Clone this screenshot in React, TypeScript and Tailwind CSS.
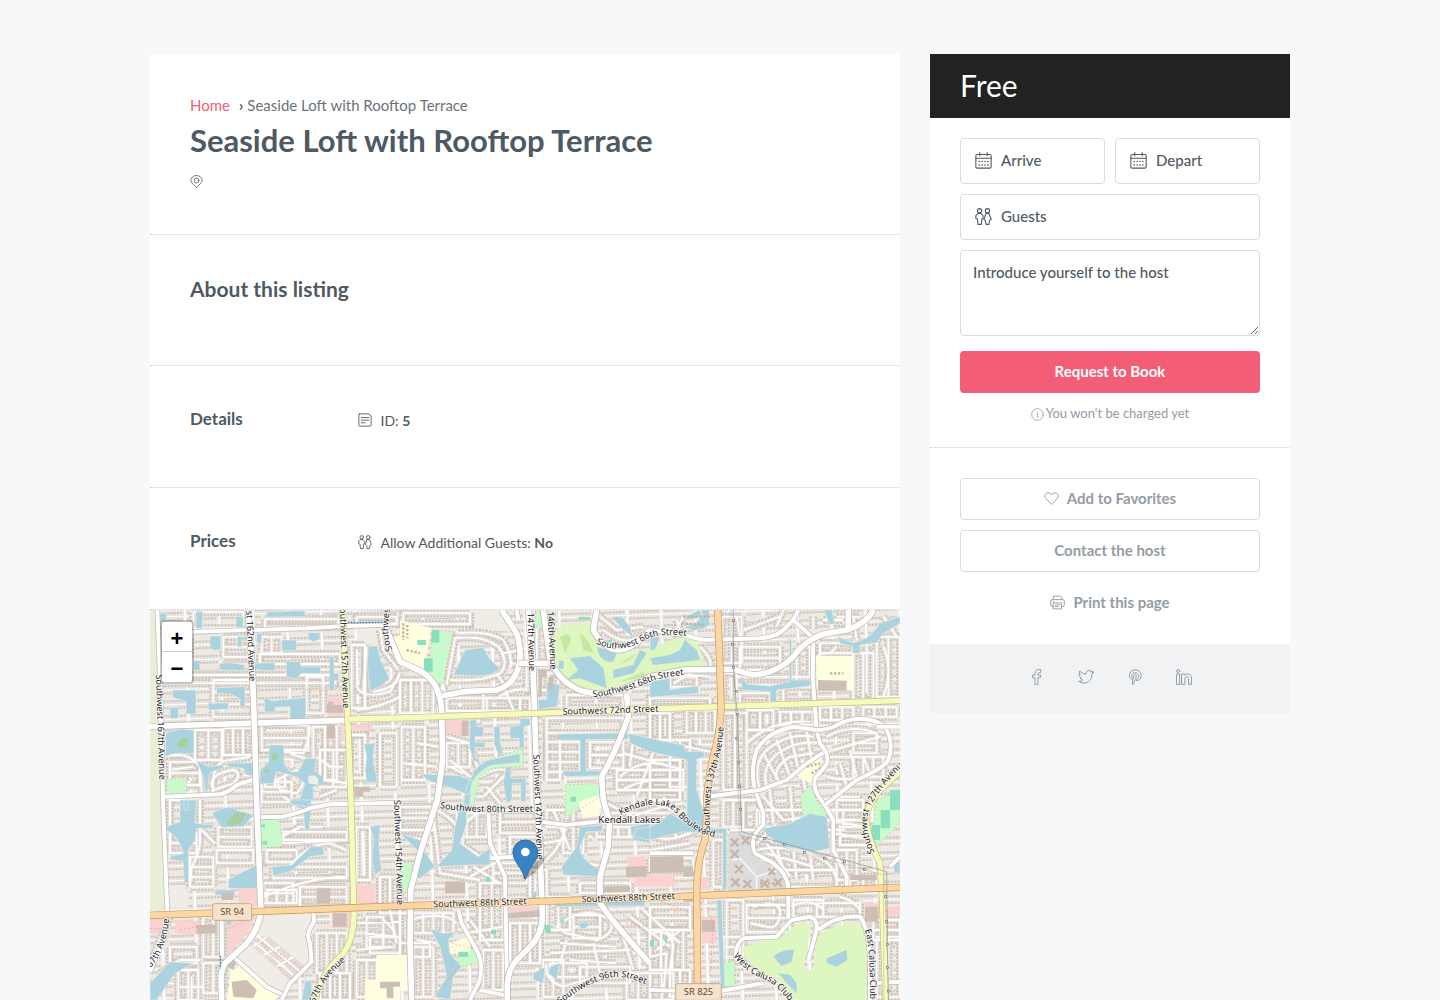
import type { ReactNode } from "react";

type Box = [number, number, number, number];

interface IconProps {
  className?: string;
  children: ReactNode;
}

interface StreetLabel {
  id: string;
  text: string;
  d: string;
}

// Map geometry is stored at three units per CSS pixel.
const MAP_W = 2250;
const MAP_H = 1170;

// Residential blocks: [x, y, width, height]
const ROWS_H: Box[] = [
  [130, 5, 150, 50], [345, 28, 220, 24], [45, 195, 510, 25], [220, 80, 75, 60], [330, 132, 240, 30],
  [190, 210, 120, 110], [335, 345, 140, 75], [60, 455, 90, 70], [335, 515, 90, 60], [620, 20, 120, 22],
  [760, 10, 200, 32], [890, 265, 220, 38], [1010, 265, 130, 40], [1190, 325, 230, 45], [1190, 395, 100, 90],
  [1320, 395, 100, 80], [1250, 255, 170, 40], [1560, 200, 80, 30], [1500, 265, 180, 26], [1770, 110, 120, 70],
  [1760, 200, 180, 26], [1770, 250, 90, 30], [1500, 450, 90, 120], [1900, 230, 90, 45], [2010, 100, 100, 30],
  [2110, 370, 70, 60], [350, 720, 90, 35], [370, 770, 220, 35], [340, 820, 90, 60], [450, 830, 140, 60],
  [400, 665, 190, 25], [60, 670, 80, 60], [205, 650, 100, 60], [200, 720, 110, 40], [60, 1010, 80, 50],
  [750, 590, 100, 70], [1050, 600, 110, 70], [1080, 680, 90, 60], [1190, 600, 80, 50], [1030, 760, 100, 60],
  [1270, 915, 80, 70], [1290, 820, 150, 30], [1820, 600, 150, 50], [2060, 570, 80, 60], [2070, 650, 100, 55],
  [1910, 780, 150, 50], [1790, 885, 130, 80], [1500, 745, 130, 35], [1930, 870, 90, 50], [1720, 980, 50, 60],
  [2170, 930, 80, 60], [660, 980, 90, 50], [1290, 1070, 150, 50], [1500, 890, 120, 70], [1400, 480, 200, 60],
  [1200, 1060, 110, 40], [750, 1000, 90, 40], [120, 740, 70, 90], [1360, 610, 200, 30], [2000, 880, 130, 40],
];

const ROWS_V: Box[] = [
  [135, 360, 80, 90], [220, 355, 88, 80], [50, 85, 70, 60], [335, 80, 60, 50], [490, 350, 70, 160],
  [510, 420, 80, 110], [605, 105, 40, 190], [470, 200, 50, 110], [600, 375, 45, 130], [690, 370, 50, 160],
  [750, 210, 100, 100], [755, 350, 70, 160], [890, 400, 70, 70], [1160, 50, 35, 120], [1165, 190, 60, 50],
  [1190, 370, 40, 140], [1500, 310, 60, 80], [1610, 300, 85, 70], [1560, 390, 60, 140], [1715, 20, 60, 140],
  [1720, 190, 40, 90], [1720, 310, 70, 230], [1790, 300, 80, 60], [1890, 305, 100, 40], [1940, 110, 40, 90],
  [2110, 130, 60, 140], [2180, 80, 70, 180], [2010, 290, 100, 40], [2140, 290, 100, 30], [2110, 440, 90, 60],
  [345, 470, 60, 60], [60, 570, 50, 80], [160, 920, 60, 120], [160, 1060, 60, 90], [85, 1080, 60, 90],
  [350, 840, 90, 40], [500, 970, 90, 120], [510, 1090, 90, 80], [620, 650, 40, 160], [690, 800, 60, 110],
  [650, 920, 50, 90], [620, 1050, 60, 110], [790, 910, 120, 60], [990, 820, 70, 170], [1080, 940, 90, 120],
  [1240, 640, 60, 90], [1140, 780, 50, 80], [1190, 860, 70, 100], [750, 910, 30, 160], [920, 610, 90, 70],
  [1690, 690, 30, 140], [1730, 870, 50, 200], [1720, 570, 60, 80], [1500, 960, 100, 120], [1780, 570, 50, 90],
  [2020, 600, 60, 60], [2060, 720, 60, 90], [2180, 980, 70, 180], [2100, 800, 80, 50], [1340, 650, 130, 30],
  [1000, 1020, 60, 120], [1180, 1050, 60, 110], [1560, 1080, 60, 80], [790, 1010, 60, 150], [1430, 1090, 140, 80],
];

// Winding neighbourhood streets
const LOCAL = [
  "M640 245 L650 110 M668 245 Q745 235 748 190 M620 300 Q700 290 750 260",
  "M620 230 Q640 270 720 245 L750 190 M690 60 L700 120 L745 180",
  "M890 225 L915 85 Q1000 75 1045 110 Q1080 160 1050 190 Q1000 215 900 210",
  "M885 250 L870 180 M925 70 Q1010 60 1060 90 Q1090 140 1080 175 M1080 160 L1125 165",
  "M1110 120 L1060 130 M1040 190 L1070 235 M1040 265 Q1090 230 1130 240 L1130 165",
  "M860 320 L880 210 M1000 250 L1000 300 M1060 225 L1090 300",
  "M1350 20 L1400 60 L1480 50 M1360 60 Q1420 110 1470 80",
  "M1565 80 L1600 20 M1550 110 L1600 90 L1580 30",
  "M1560 190 L1680 200 M1570 220 L1640 180",
  "M1650 110 Q1690 150 1680 170",
  "M1790 400 Q1860 330 1980 335 M1830 540 Q1800 440 1880 400 Q1930 370 1990 380",
  "M1850 530 Q1830 460 1900 420 Q1950 390 2010 400 M1880 510 Q1870 470 1920 440 L1990 430",
  "M1920 370 L1950 500 M1970 365 L1985 450 M1880 390 L1920 500 M1840 430 L1890 520",
  "M2030 380 Q2100 340 2180 370 M2050 420 L2190 380 M2030 440 L2210 440 M2100 420 L2120 500",
  "M2070 460 L2090 530 M2140 440 L2160 490 M2030 500 Q2100 520 2150 490 M2050 560 L2130 560",
  "M1840 560 L1900 630 L1980 620 M1860 545 L1870 640 M1920 530 L1930 640 M1960 510 L1980 600",
  "M1820 720 Q1900 700 2000 740 Q2050 760 2060 810 M1880 710 L1900 780 M1930 720 L1940 810 M1980 730 L1990 810 M1850 700 L1920 800",
  "M1820 700 L1880 640 M1850 730 L1990 770 M2030 630 L2150 650 M2050 670 L2170 690",
  "M335 640 Q380 660 400 700 L590 690 M410 780 Q470 700 540 700 L590 720",
  "M345 700 Q420 670 450 650 L520 650 M340 860 Q480 800 590 800",
  "M190 560 Q180 450 240 450 L300 440 M185 530 Q180 490 250 480 Q280 490 250 520 L190 540",
  "M45 440 Q110 420 150 470 L155 550 M55 480 L130 470 M60 520 L120 515",
  "M350 420 L460 430 Q480 380 480 350 M420 430 L480 450",
  "M380 510 L440 480 Q480 510 440 550 L390 540 Z M400 560 L430 580",
  "M500 440 L540 470 L580 470 M520 510 L590 520 M510 560 L560 540",
  "M60 920 L0 1060 M30 1090 L90 1050 L150 1050 M0 1150 L60 1090",
  "M125 1100 L125 1170 M90 1130 L160 1130",
  "M120 830 L125 770 Q150 730 150 690 L150 570 M155 660 L195 700",
  "M620 940 L750 935 M640 970 L740 980 M620 1020 L730 1010",
  "M700 930 Q740 960 730 980 M720 900 L740 1000",
  "M890 380 L960 400 L985 480 M900 450 L960 500 M960 350 L990 330",
  "M800 400 L870 410 M760 460 L860 470 M900 470 L940 490",
  "M990 500 Q1030 470 1070 480 M1000 560 L1080 480 M1010 530 L1050 580",
  "M760 680 L830 690 M850 620 L870 790 L990 810 M940 700 Q920 640 1000 600",
  "M860 600 Q940 640 930 700 L990 740 M970 770 L1050 820 M960 800 L1030 760",
  "M780 930 Q880 900 920 940 M800 990 L860 1000 M960 930 L1020 1010 M950 970 L1060 950",
  "M1190 750 Q1240 700 1250 640 L1340 640 M1180 700 L1240 690 M1210 600 L1260 720",
  "M1290 740 L1290 700 Q1290 660 1340 660 M1320 760 Q1360 780 1370 740",
  "M1220 950 Q1300 880 1380 930 Q1400 970 1340 990 L1250 970 Z",
  "M1230 1000 L1400 1010 M1200 1030 L1440 1020 M1250 990 L1230 1060 M1330 1000 L1350 1090 M1410 950 L1450 1080",
  "M1190 1060 Q1180 1110 1240 1130 L1340 1100 M1260 1050 L1400 1060",
  "M1440 920 L1560 1010 M1480 900 L1590 1000 M1520 1020 L1590 960",
  "M1560 400 L1700 430 M1450 380 L1440 470 M1490 390 L1600 440 M1420 430 L1600 480",
  "M1410 500 Q1480 440 1560 470 M1420 540 Q1480 500 1600 510 M1520 400 L1460 560",
  "M1370 580 L1450 620 Q1520 590 1600 580 M1540 620 L1580 680",
  "M1500 720 L1620 700 M1510 680 Q1560 700 1640 660",
  "M1740 660 L1790 660",
  "M1810 890 Q1880 870 1890 900 Q1890 960 1850 950 L1800 940",
  "M1920 890 Q1990 860 2020 900 M2070 860 Q2110 870 2130 900",
  "M1500 970 Q1560 950 1570 1010 L1560 1080 M1500 1040 L1550 1030 L1540 1150",
  "M1540 560 L1560 600 M2110 20 L2120 90 M2200 20 L2240 80 M1990 20 L1990 60",
  "M1890 20 L1780 60 M1880 50 L1900 0 M1760 20 L1770 80 M2060 20 L2130 20 M2020 30 L2080 30",
  "M2000 160 Q1990 130 2040 130 L2060 110 M2150 110 L2150 250 M2200 110 Q2230 180 2200 260",
];

const WATER = [
  "M30 10 H50 V35 H30 Z M138 5 H158 V55 H138 Z M350 5 L465 2 V20 L350 22 Z M258 20 H280 V52 H258 Z",
  "M180 78 H212 V118 L195 122 L180 115 Z M262 80 H295 V90 H275 V110 H262 Z M395 90 H440 V122 H395 Z M475 68 H510 V88 L490 95 L475 88 Z M320 70 H335 V100 H320 Z",
  "M130 152 H150 V182 H130 Z M208 160 L240 158 L285 165 L280 182 L208 180 Z M315 160 L375 158 V182 H345 L315 178 Z",
  "M408 155 H452 V170 H512 V190 H455 L440 206 L410 202 Z M538 140 H552 V190 H565 V212 H553 V240 H538 Z",
  "M200 233 L285 230 V290 H270 V265 L240 252 L200 250 Z M68 240 H138 V312 H108 V275 L68 262 Z M60 292 H85 V325 H60 Z M175 280 L235 278 V298 L175 300 Z",
  "M343 265 H360 V272 L468 263 V328 H420 V290 L375 292 V306 H343 Z",
  "M655 108 H682 L690 145 L718 205 Q700 230 660 242 L652 160 Z",
  "M48 370 Q90 350 132 362 V430 L110 432 Q70 425 46 442 Z",
  "M138 450 L175 470 L220 465 V475 L185 485 Q172 500 174 545 H166 Q165 500 138 450 Z M230 460 L310 458 V498 L290 495 L280 475 L235 470 Z",
  "M358 405 H402 V460 L420 485 H445 L465 445 H498 L495 485 L520 500 V525 L490 530 V570 L470 590 L420 582 V568 L450 565 L465 520 L440 500 L380 485 L370 520 L330 522 V480 L355 460 Z",
  "M642 402 L675 400 Q665 430 672 465 L683 515 L650 518 L645 480 L650 440 Z M102 570 H115 V600 H102 Z M545 50 H565 V62 H545 Z M20 0 H28 V60 H20 Z",
  "M945 120 L1000 112 L1018 145 L1048 175 Q1035 195 990 198 L910 195 Z",
  "M1190 215 L1230 225 L1222 290 L1165 298 V268 H1190 Z",
  "M960 330 H980 V350 H1000 V380 H975 V397 H1005 V412 H975 V440 L995 462 L970 452 L958 410 Z M1032 350 H1050 V395 L1060 430 L1045 435 L1032 400 Z M1080 350 L1110 345 V325 H1140 V345 L1122 350 V410 L1108 418 V385 H1080 Z",
  "M815 492 L930 497 L970 515 L955 555 L905 535 L830 510 Z",
  "M960 510 Q980 450 1040 445 L1110 430 V458 L1030 465 Q990 475 965 520 L958 600 H940 Q940 545 960 510 Z",
  "M1068 470 H1082 V505 H1128 V575 H1112 V520 H1086 V570 L1070 580 L1060 520 Z",
  "M1222 372 L1430 368 L1438 380 L1430 388 H1308 V482 H1350 V497 L1250 500 L1235 490 L1242 483 H1290 V390 H1222 Z",
  "M1435 370 L1500 385 L1600 405 L1610 425 L1660 425 L1665 440 L1640 448 V540 L1660 600 L1665 670 L1600 665 L1500 690 L1450 680 L1460 655 Q1510 660 1560 610 L1610 640 L1612 450 L1500 425 L1440 400 Z",
  "M1385 20 H1415 L1440 50 L1450 82 L1420 60 Z M1610 20 L1645 0 L1660 15 L1630 28 L1605 30 Z M1655 0 H1678 V30 Q1690 55 1630 62 L1600 52 Q1660 40 1655 0 Z M1500 70 L1530 85 L1515 120 H1500 Z",
  "M1522 210 L1560 205 V240 L1600 232 L1645 228 V250 L1500 262 V215 Z",
  "M1775 195 L1790 222 L1860 228 L1918 215 V90 L1900 75 L1925 90 V210 H1980 V228 L1880 240 V275 H1860 V245 L1775 240 Z",
  "M2020 0 H2045 L2055 40 L2040 45 Z M2062 80 L2110 98 Q2160 90 2190 40 L2250 20 V40 L2200 70 L2180 98 L2130 105 V130 H2108 V110 L2070 100 Z",
  "M48 650 L90 635 V570 H140 L135 640 L190 645 V655 H140 L135 690 L115 720 V820 L103 818 L100 755 L60 748 V740 L100 730 Q90 680 48 660 Z",
  "M185 610 Q240 580 260 600 L310 615 L280 650 L215 652 Z M235 808 L320 765 V835 H235 Z M195 840 H255 V855 H195 Z",
  "M365 770 L425 765 L485 708 L520 710 L522 735 L480 740 L420 785 L370 798 Z M420 570 H485 L478 660 H465 L460 600 L420 580 Z",
  "M660 650 L692 645 Q680 690 695 780 L675 795 L665 750 L672 690 Z M0 1120 L60 1055 L130 1060 L75 1090 L20 1170 H0 Z M465 1115 L485 1110 V1170 H455 Z M228 930 H245 V945 H228 Z",
  "M750 670 L810 690 L815 710 L855 770 L810 805 L782 800 L810 730 Z M930 580 H950 V640 L930 700 L985 740 L1020 715 V765 L960 765 L860 770 L905 720 L915 650 Z",
  "M1290 650 L1360 645 L1355 665 L1310 665 L1290 710 Q1290 750 1350 780 L1345 800 L1240 795 L1235 770 L1280 710 Z M1440 650 L1500 640 V700 L1450 690 Z",
  "M840 955 L880 970 L915 965 L895 990 L900 1030 L935 1070 L910 1100 L900 1170 L855 1160 L890 1100 L870 1010 Z M1215 870 H1485 V888 L1215 890 Z",
  "M1150 850 L1160 840 V865 H1140 Z M1150 1090 L1185 1070 L1180 1120 L1150 1110 Z M1200 1070 L1230 1060 L1220 1110 L1195 1090 Z M1235 925 Q1245 920 1243 945 Q1230 950 1230 930 Z M1288 940 Q1310 930 1318 945 Q1300 965 1288 950 Z",
  "M1665 655 H1730 V840 H1718 V670 H1665 Z M1700 870 H1715 L1725 1140 H1712 Z",
  "M1840 655 L1920 640 L1980 610 L2030 620 L2040 715 L1990 725 L1900 710 L1850 675 Z M2232 760 L2250 755 V790 H2232 Z",
];

const PARKS = [
  "M50 508 L110 503 V553 H50 Z", "M848 60 L910 65 L880 220 L855 225 L835 185 Z", "M1155 5 H1195 V52 H1155 Z",
  "M965 505 L1000 455 L1120 415 V470 L1030 475 L990 500 L970 590 H930 Z", "M1245 525 L1350 520 V560 L1245 625 Z",
  "M332 630 L388 628 L398 710 L335 712 Z", "M750 760 L790 755 L780 845 L760 850 Z", "M905 1000 L985 1020 L985 1060 L930 1070 Z",
  "M1950 560 L1980 525 L2010 590 L2050 610 L1960 625 Z", "M2180 570 L2250 540 V640 L2180 710 L2165 660 Z",
  "M1722 1055 H1755 V1130 H1720 Z",
];

const GOLF = [
  "M1215 60 Q1270 30 1330 40 Q1330 90 1390 130 L1460 125 L1590 82 L1640 90 L1665 165 L1500 215 L1350 245 L1270 235 L1205 180 Z",
  "M1780 1010 Q1850 990 1890 985 L1935 945 L1985 940 L1960 1080 L1990 1080 L2000 980 Q2060 935 2130 940 L2150 1000 V1170 H1925 Q1900 1110 1840 1090 Q1775 1050 1780 1010 Z",
];

const GOLF_WATER = [
  "M1260 145 L1320 138 L1360 175 L1370 235 L1290 205 L1250 210 L1285 180 Z M1340 110 L1400 130 L1390 155 Q1350 160 1340 110 Z M1390 180 L1450 165 L1470 120 L1490 130 L1450 190 L1390 205 Z M1228 150 L1242 155 L1240 178 L1226 175 Z",
  "M1500 145 L1560 135 L1590 120 L1605 90 L1640 120 L1650 150 L1560 160 L1510 165 Z",
  "M1870 1040 Q1900 1015 1932 1020 L1925 1055 L1895 1068 Z M1885 1090 L1920 1095 L1940 1120 V1150 L1915 1125 Z M2030 1045 L2090 1020 L2092 1050 L2060 1070 L2030 1058 Z",
];

const SCHOOLS = [
  "M750 30 L845 55 L820 185 L750 150 Z", "M1285 575 L1345 555 L1350 615 L1300 625 Z", "M1998 138 H2110 V240 H2000 Z",
  "M2020 435 L1990 525 L1938 495 L1960 470 Z", "M680 1035 H750 V1170 H645 V1110 H680 Z", "M245 1080 L270 1070 L350 1130 L390 1160 L370 1170 H230 Z",
  "M895 1000 L960 980 L960 1035 L895 1030 Z", "M750 1035 H780 V1140 H750 Z", "M735 80 L750 75 V130 L725 110 Z",
];

const RETAIL = [
  "M525 265 L582 262 V315 L530 318 Z", "M530 345 H580 V392 H525 Z", "M608 345 L665 338 V360 L608 362 Z", "M885 330 L960 328 L958 378 L885 382 Z",
  "M0 925 H60 V980 L0 970 Z", "M75 930 L205 935 V975 L75 970 Z", "M498 830 H550 V890 H498 Z", "M545 900 H600 V955 H545 Z", "M265 835 H325 V890 H265 Z",
  "M620 825 H680 V885 H620 Z", "M1075 890 L1160 888 L1165 920 L1075 928 Z", "M220 930 L320 910 L300 960 L240 1030 L220 1040 Z",
  "M1430 740 H1500 V830 H1440 Z", "M1500 790 H1575 V830 H1500 Z", "M1650 800 H1675 V840 H1650 Z", "M1655 920 H1700 V1000 H1655 Z",
  "M2140 880 H2190 V945 H2140 Z", "M2210 890 H2250 V950 H2210 Z",
];

const BUILDINGS = [
  "M535 275 H550 V285 H580 V308 H530 V290 Z", "M530 345 H555 V385 H530 Z", "M935 332 H955 V378 H935 Z", "M2004 210 L2090 212 V242 H2004 Z",
  "M500 835 H540 V880 H500 Z", "M548 910 H590 V950 H548 Z", "M138 945 L200 945 V970 L140 972 Z", "M215 850 H250 V870 H215 Z",
  "M885 815 H945 V850 H885 Z", "M1428 770 L1490 768 V800 L1428 802 Z", "M1500 740 L1600 738 V785 L1500 788 Z",
  "M1655 930 H1695 V965 H1655 Z", "M2145 890 H2185 V935 H2145 Z", "M245 1115 L290 1110 L320 1140 L310 1165 L250 1160 Z", "M690 1115 H750 V1130 H730 V1165 H710 V1135 H690 Z",
  "M1600 860 H1640 V875 H1600 Z", "M1360 830 L1440 828 V845 L1360 848 Z", "M235 1040 L260 1050 L250 1080 L232 1070 Z",
  "M1165 180 H1190 V200 H1175 V260 H1165 Z", "M1195 200 H1210 V240 H1195 Z", "M610 530 H660 V545 H640 V560 H615 Z", "M1075 910 L1170 900 V920 L1075 925 Z",
  "M2100 795 H2180 V810 H2100 Z", "M1600 770 H1630 V800 H1600 Z",
];

const PITCHES = [
  "M845 60 H868 V98 H845 Z", "M822 145 H848 V185 H822 Z", "M802 90 H828 V105 H802 Z", "M2220 540 H2250 V600 H2220 Z", "M2192 600 H2220 V655 H2192 Z",
  "M2165 645 H2190 V690 H2165 Z", "M1023 960 H1038 V972 H1023 Z", "M1185 945 H1202 V968 H1185 Z", "M925 1025 H955 V1040 H925 Z", "M1008 800 H1020 V815 H1008 Z",
  "M1285 20 H1320 V28 H1285 Z", "M1262 560 H1278 V575 H1262 Z", "M335 643 H345 V652 H335 Z M338 693 H352 V704 H338 Z", "M1500 990 H1512 V1010 H1500 Z M1545 985 H1552 V1000 H1545 Z", "M1370 90 H1385 V98 H1370 Z",
];

const MINOR_ROADS = [
  "M22 0 L30 200 L40 600 L52 905 M52 905 L40 990 L0 1085",
  "M35 75 L130 65 L470 55 L590 48 L700 45",
  "M45 560 L210 553 Q240 545 260 525 L310 508",
  "M330 622 L400 620 Q460 605 480 595 L540 583 L750 578",
  "M215 920 L216 1040 M250 1040 L350 1130 L400 1155",
  "M490 905 L492 935 Q465 970 480 1000 L485 1055 L420 1120 L395 1170",
  "M1500 60 L1600 75 L1660 90 L1830 85 Q1880 80 1900 60 L1930 30 L1945 0 M1930 30 L1990 85 L1988 200 L2000 360 L2010 400 Q2045 440 2025 470 L1995 505 Q1985 540 2025 585 L2050 630 L2050 720 L2090 800 L2090 845",
  "M2000 360 L1930 350 Q1850 365 1820 420 Q1800 480 1815 540 L1840 610 L1840 645 Q1795 680 1815 730 L1870 760 Q1910 790 1915 830 L1915 925",
  "M2000 360 Q2040 360 2070 340 Q2140 310 2200 345 Q2235 390 2215 450 Q2200 475 2120 510 L2025 585",
  "M2020 428 L1970 460 L1910 510 L1830 540 L1670 560",
  "M1015 600 L1020 700 L1065 800 L1072 1170 M1020 745 L1100 740",
  "M925 900 L935 940 L980 1020 Q1010 1080 975 1140 L960 1170 M990 1140 L1080 1160",
  "M1175 635 L1250 645 L1340 635 L1370 625",
  "M1760 1050 Q1750 1010 1780 985 L1880 980 L1925 930 L1980 920 Q2005 930 2000 960 M2005 960 Q2060 915 2130 920 Q2155 950 2160 1050 V1170 M2000 960 L1975 1050",
  "M1500 1140 L1700 1145 L1840 1120",
  "M1500 730 L1630 730 M2180 350 H2250 M2220 770 L2250 740 M2165 1120 L2250 1115 M1100 0 L1105 30",
];

const MAJOR_ROADS = [
  "M0 350 L130 345 L590 331",
  "M295 0 L308 200 L313 340 L320 580 L333 900 Q330 950 290 1000 L225 1060 Q213 1080 213 1110 L215 1170",
  "M705 50 L750 155 L815 185 Q870 220 875 300 L878 450 L862 570 L810 730 L782 840 L780 1000 L785 1170",
  "M1055 0 L1100 70 Q1115 120 1108 160 Q1095 225 1040 240 L940 245 L875 258",
  "M1135 0 L1148 150 L1155 340 L1162 570 L1170 720 L1177 910 Q1180 970 1140 1010 L1100 1050 Q1075 1080 1072 1120 V1170",
  "M1180 0 L1200 150 Q1230 220 1300 245 L1350 253 Q1420 245 1500 200 L1600 180 L1750 178 L1810 195 Q1880 190 1930 140 Q1970 85 2030 70 L2090 60 Q2150 40 2170 0 M2095 0 V58",
  "M1105 160 H1195",
  "M1340 0 L1330 60 Q1360 115 1400 120 Q1450 120 1500 60",
  "M1430 250 L1435 320 Q1400 420 1355 500 L1360 570 L1378 630 L1375 710 L1350 800 V880 Q1400 950 1500 1060",
];

const YELLOW_ROADS = [
  "M578 0 L592 300 L603 570 L612 920 Q610 990 580 1030 Q505 1100 497 1170",
  "M595 327 L750 324 L1150 310 L1500 297 L2250 272",
  "M2250 485 L2190 540 Q2150 590 2148 620 Q2150 680 2190 760 L2197 870 L2207 1170",
];

const ORANGE_ROADS = [
  "M0 916 L360 903 L750 888 L1500 863 L2250 832",
  "M1703 0 L1710 180 L1713 300 Q1710 370 1690 440 Q1668 530 1670 620 L1665 690 Q1645 740 1640 830 L1643 1170",
];

const LABELS: StreetLabel[] = [
  { id: "sw167", text: "Southwest 167th Avenue", d: "M18 194 L28 515" },
  { id: "sw162", text: "Southwest 162nd Avenue", d: "M284 -108 L299 235" },
  { id: "sw157", text: "Southwest 157th Avenue", d: "M569 -20 L580 310" },
  { id: "southwes", text: "Southwest", d: "M728 118 Q700 80 730 -60" },
  { id: "sw147a", text: "Southwest 147th Avenue", d: "M1128 -132 L1138 200" },
  { id: "sw146a", text: "Southwest 146th Avenue", d: "M1186 -136 L1202 195" },
  { id: "sw66", text: "Southwest 66th Street", d: "M1338 100 Q1400 132 1470 98 Q1530 60 1630 82" },
  { id: "sw68", text: "Southwest 68th Street", d: "M1330 262 Q1420 250 1500 216 Q1540 200 1610 194" },
  { id: "sw72", text: "Southwest 72nd Street", d: "M1238 314 L1560 304" },
  { id: "sw137", text: "Southwest 137th Avenue", d: "M1680 662 Q1672 560 1697 480 Q1722 400 1721 330" },
  { id: "sw127", text: "Southwest 127th Avenue", d: "M2174 728 Q2130 630 2172 570 Q2210 510 2290 440" },
  { id: "sw147b", text: "Southwest 147th Avenue", d: "M1150 434 L1162 770" },
  { id: "sw80", text: "Southwest 80th Street", d: "M870 594 Q960 612 1170 604" },
  { id: "kendale", text: "Kendale Lakes Boulevard", d: "M1412 616 Q1510 562 1570 600 Q1625 670 1700 682" },
  { id: "sw154", text: "Southwest 154th Avenue", d: "M732 570 L742 900" },
  { id: "sw88a", text: "Southwest 88th Street", d: "M850 892 L1150 882" },
  { id: "sw88b", text: "Southwest 88th Street", d: "M1295 877 L1600 866" },
  { id: "sw167b", text: "167th Avenue", d: "M-8 1085 Q58 1020 60 880" },
  { id: "sw157b", text: "157th Avenue", d: "M492 1195 Q510 1110 590 1050" },
  { id: "sw96", text: "Southwest 96th Street", d: "M1230 1182 Q1310 1120 1370 1105 Q1420 1090 1490 1125" },
  { id: "westcalusa", text: "West Calusa Club Drive", d: "M1750 1038 Q1790 1090 1850 1110 Q1900 1140 1950 1220" },
  { id: "eastcalusa", text: "East Calusa Club Drive", d: "M2144 960 Q2166 1010 2158 1290" },
];

function blockPath([x, y, w, h]: Box, vertical: boolean) {
  const span = vertical ? w : h;
  const count = Math.max(1, Math.round(span / 34));
  let d = `M${x} ${y}h${w}v${h}h${-w}z`;
  for (let i = 1; i < count; i++) {
    const offset = Math.round((span * i) / count);
    d += vertical ? `M${x + offset} ${y}v${h}` : `M${x} ${y + offset}h${w}`;
  }
  return d;
}

const LOCAL_PATH = [
  ...ROWS_H.map((b) => blockPath(b, false)),
  ...ROWS_V.map((b) => blockPath(b, true)),
  ...LOCAL,
].join(" ");

function Road({ d, casing, fill, width }: { d: string; casing: string; fill: string; width: number }) {
  return (
    <g fill="none" strokeLinejoin="round">
      <path d={d} stroke={casing} strokeWidth={width + 4} />
      <path d={d} stroke={fill} strokeWidth={width} />
    </g>
  );
}

function Shield({ x, y, w, text }: { x: number; y: number; w: number; text: string }) {
  return (
    <g>
      <rect x={x} y={y} width={w} height="50" rx="6" fill="#f6e3cf" stroke="#cbab86" strokeWidth="3" />
      <text x={x + w / 2} y={y + 35} textAnchor="middle" fontSize="28" fill="#6b4a24">
        {text}
      </text>
    </g>
  );
}

function StreetMap() {
  return (
    <svg
      viewBox={`0 0 ${MAP_W} ${MAP_H}`}
      preserveAspectRatio="xMidYMid slice"
      className="block h-full w-full"
      role="img"
      aria-label="Map of Kendall Lakes"
      fontFamily='"Noto Sans", sans-serif'
    >
      <defs>
        <pattern id="houses" width="102" height="44" patternUnits="userSpaceOnUse" patternTransform="rotate(-2)">
          <rect width="102" height="44" fill="#eeeae3" />
          <path d="M10 12 H96 M10 32 H96" stroke="#cfc4bb" strokeWidth="7" strokeDasharray="7 3" />
          <path d="M0 22 H102 M3 0 V44" stroke="#c9c5c2" strokeWidth="8" />
          <path d="M0 22 H102 M3 0 V44" stroke="#ffffff" strokeWidth="6" />
        </pattern>
      </defs>

      <rect width={MAP_W} height={MAP_H} fill="url(#houses)" />
      <path d="M0 0 H20 L34 570 L44 905 H0 Z" fill="#e9eed6" />
      <path d="M60 825 H115 V895 H62 Z M130 780 L185 770 V830 H130 Z M620 50 H700 L690 100 H640 L620 90 Z M340 0 L345 3 Z M2020 410 L2190 370 L2200 390 L2030 440 Z M960 0 H1050 L1090 65 L1000 60 L900 62 Z" fill="#f0ede6" />
      <path d={RETAIL.join(" ")} fill="#f8d3d0" />

      <g fill="none">
        <path d={LOCAL_PATH} stroke="#eeeae3" strokeWidth="27" />
        <path d={LOCAL_PATH} stroke="#cfc4bb" strokeWidth="24" strokeDasharray="7 3" />
        <path d={LOCAL_PATH} stroke="#eeeae3" strokeWidth="12" />
        <path d={LOCAL_PATH} stroke="#c9c5c2" strokeWidth="8" strokeLinejoin="round" />
        <path d={LOCAL_PATH} stroke="#ffffff" strokeWidth="6" strokeLinejoin="round" />
      </g>

      {/* Vacant land south of SR 94 */}
      <path d="M340 920 L490 910 L465 980 L480 1050 L420 1110 L395 1160 L250 1035 L320 960 Z" fill="#f0ede6" />
      <path d="M290 995 L350 975 L480 1080 L420 1110 Z" fill="#e4dcd6" />
      <path d="M300 985 L430 1095 M320 975 L450 1085 M310 1010 L350 980 M340 1035 L390 1010 M380 1070 L430 1040" fill="none" stroke="#ffffff" strokeWidth="5" />

      {/* Apartment complex */}
      <path d="M1735 670 L1800 665 L1830 750 L1905 790 L1910 840 L1735 845 Z" fill="#dcdcdc" />
      <path d="M1745 750 L1770 745 L1820 800 L1880 780 M1820 800 V840" fill="none" stroke="#f5f5f5" strokeWidth="5" />
      <g fill="none" stroke="#c8b4a7" strokeWidth="7">
        <path d="M1742 685 l24 24 m0 -24 l-24 24 M1775 680 l24 24 m0 -24 l-24 24 M1742 720 l24 24 m0 -24 l-24 24" />
        <path d="M1744 805 l24 24 m0 -24 l-24 24 M1780 810 l24 24 m0 -24 l-24 24 M1832 808 l24 24 m0 -24 l-24 24 M1872 805 l24 24 m0 -24 l-24 24 M1755 765 l24 24 m0 -24 l-24 24 M1855 775 l20 20 m0 -20 l-20 20" />
      </g>

      <path d={PARKS.join(" ")} fill="#c8facc" />
      <path d={SCHOOLS.join(" ")} fill="#ffffe0" />
      <path d={PARKS.join(" ")} fill="none" stroke="#f08a80" strokeWidth="2" strokeDasharray="4 8" />
      <path d={GOLF.join(" ")} fill="#def6c0" />
      <path d="M1230 80 Q1270 60 1260 100 L1245 130 Z M1290 70 Q1320 90 1330 130 L1300 120 Z M1400 165 Q1450 150 1460 130 M1410 215 L1480 185 L1490 200 Z" fill="#c5e8a0" />
      <path d={WATER.join(" ")} fill="#aad3df" stroke="#eeeae3" strokeWidth="2" />
      <path d={GOLF_WATER.join(" ")} fill="#aad3df" />
      <path d="M80 405 L95 385 L115 388 L112 410 L90 413 Z M365 435 Q380 425 387 440 Q378 455 365 448 Z M343 480 Q352 470 358 482 Q350 492 343 487 Z M230 640 L255 608 L290 610 L270 640 L240 648 Z" fill="#a6cf9c" />
      <path d="M475 500 Q490 490 505 505 V525 L475 520 Z" fill="#f0ede6" />
      <path d={PITCHES.join(" ")} fill="#88e0be" />
      <path d={BUILDINGS.join(" ")} fill="#cdbfb5" />
      <g fill="none" stroke="#c4aea0" strokeWidth="7" strokeDasharray="7 5">
        <path d="M1600 20 H1680 M1595 40 L1660 45 M1830 820 H1890" />
        <path d="M760 40 V90 M772 45 V85 M770 120 L810 130 M2040 190 H2080 M1970 470 L2010 460 M1985 490 L2010 475" />
      </g>
      <g fill="none" stroke="#f2857c" strokeWidth="2" strokeDasharray="5 7">
        <path d="M225 960 L310 920 M300 990 L340 1000 L470 1110 M330 990 L400 1090 L430 1110 M370 1020 L480 1090" />
        <path d="M1400 900 L1480 960 M1430 940 L1490 950 M1660 870 L1690 940 L1680 1100 M1500 860 L1600 900 M840 1000 L900 1050 L920 1080 L850 1160" />
        <path d="M725 60 V160 M655 350 V315 M470 240 H580 M0 955 L60 960 M90 960 L200 940 M2210 900 V960 M1760 265 L1840 270" />
      </g>

      {MINOR_ROADS.map((d) => (
        <Road key={d} d={d} casing="#bebab7" fill="#ffffff" width={12} />
      ))}
      {MAJOR_ROADS.map((d) => (
        <Road key={d} d={d} casing="#b9b6b3" fill="#ffffff" width={17} />
      ))}
      {YELLOW_ROADS.map((d) => (
        <Road key={d} d={d} casing="#c3c17d" fill="#f7fabf" width={16} />
      ))}
      {ORANGE_ROADS.map((d) => (
        <Road key={d} d={d} casing="#c69a4c" fill="#fcd6a4" width={18} />
      ))}

      {/* Power lines */}
      <g fill="none" stroke="#8f8f8f" strokeWidth="2">
        <path d="M1750 0 L1750 172 L1762 313 L1775 665 L2210 785 L2215 1170" />
        <path d="M1742 0 L1757 300 L1768 675 L2200 795 L2202 1170" strokeWidth="1" />
      </g>
      <g fill="#dddddd" stroke="#777777" strokeWidth="2">
        {[
          [1750, 32], [1747, 103], [1750, 172], [1759, 244], [1762, 313], [1760, 385], [1766, 457], [1768, 529], [1772, 598], [1843, 685],
          [1903, 703], [1963, 727], [2023, 745], [2083, 755], [2143, 778], [2207, 860], [2210, 934], [2212, 1003], [2212, 1072], [2215, 1143],
        ].map(([x, y]) => (
          <rect key={y} x={x - 3} y={y - 3} width="6" height="6" />
        ))}
      </g>
      <path d="M593 38 H705 M211 1038 V1075" fill="none" stroke="#2f7fd0" strokeWidth="4" strokeDasharray="5 4" />

      <g fontSize="27" fill="#222222" stroke="#ffffff" strokeOpacity="0.75" strokeWidth="5" strokeLinejoin="round" paintOrder="stroke">
        {LABELS.map((label) => (
          <g key={label.id}>
            <path id={label.id} d={label.d} fill="none" stroke="none" />
            <text>
              <textPath href={`#${label.id}`}>{label.text}</textPath>
            </text>
          </g>
        ))}
        <text x="1345" y="640" fontSize="29">
          Kendall Lakes
        </text>
      </g>

      <Shield x={188} y={881} w={117} text="SR 94" />
      <Shield x={1577} y={1121} w={137} text="SR 825" />

      {/* Marker */}
      <ellipse cx="1152" cy="775" rx="44" ry="10" fill="#000000" opacity="0.28" transform="rotate(-45 1152 775)" />
      <path d="M1126 808 Q1117 780 1099 757 Q1089 743 1089 727 A37 37 0 0 1 1163 727 Q1163 743 1153 757 Q1135 780 1126 808 Z" fill="#3883c4" stroke="#2e6c9f" strokeWidth="3" />
      <circle cx="1126" cy="726" r="13" fill="#ffffff" />
    </svg>
  );
}

function Icon({ className = "size-4", children }: IconProps) {
  return (
    <svg
      viewBox="0 0 16 16"
      fill="none"
      stroke="currentColor"
      strokeLinecap="round"
      strokeLinejoin="round"
      className={`shrink-0 ${className}`}
      aria-hidden="true"
    >
      {children}
    </svg>
  );
}

const CalendarIcon = () => (
  <Icon className="size-[17px]">
    <rect x="0.8" y="2.3" width="14.4" height="12.9" rx="1.2" />
    <path d="M0.8 5.8h14.4M4.5 0.6v3M11.5 0.6v3" />
    <path d="M3.9 9h.2M6.6 9h.2M9.3 9h.2M12 9h.2M3.9 12.2h.2M6.6 12.2h.2M9.3 12.2h.2M12 12.2h.2" strokeWidth="1.3" />
  </Icon>
);

const GuestsIcon = ({ className }: { className?: string }) => (
  <Icon className={className}>
    <circle cx="4.3" cy="2.6" r="2" />
    <circle cx="11.7" cy="2.6" r="2" />
    <path d="M2.8 5.2h3L7.6 7.4v2.5L6.4 10.2 6 15.4H2.8L2.3 10.4 0.8 9.8V7.2z" />
    <path d="M10.3 5.2h2.8l1.2 3 1 2.6-1.6 1-.6 3.6h-2.7l-.6-3.6-1.5-1.1 1-2.5z" />
  </Icon>
);

const DocumentIcon = () => (
  <Icon className="size-[14px]">
    <path d="M2 1h10.5L15 3.5V14a1 1 0 0 1-1 1H2a1 1 0 0 1-1-1V2a1 1 0 0 1 1-1zM3.7 5.2h8.6M3.7 8.2h8.6M3.7 11.2h4.6" />
  </Icon>
);

const PinIcon = () => (
  <Icon className="size-[13px]">
    <path d="M8 15.3C6 12.4 1 10.400 1 6.900a7 6.300 0 0 1 14 0C15 10.400 10 12.400 8 15.300z" />
    <circle cx="8" cy="6.8" r="3" />
  </Icon>
);

const InfoIcon = () => (
  <Icon className="size-[13px]">
    <circle cx="8" cy="8" r="7.2" />
    <path d="M7.2 6.8h.9v4M8 4.6v.2M8.1 10.8h.7" />
  </Icon>
);

const HeartIcon = () => (
  <Icon className="size-[15px]">
    <path d="M8 14L2 8.2C-.2 5.6 1.2 2 4.3 2 6.2 2 7.3 3.2 8 4.3 8.7 3.2 9.8 2 11.7 2c3.1 0 4.5 3.6 2.3 6.2z" />
  </Icon>
);

const PrinterIcon = () => (
  <Icon className="size-[15px]">
    <path d="M3.6 4V1.2h7.3l1.5 1.4V4M3.5 12.2H2.2A1.4 1.4 0 0 1 .8 10.8V6.3a1.4 1.4 0 0 1 1.4-1.4h11.6a1.4 1.4 0 0 1 1.4 1.4v4.5a1.4 1.4 0 0 1-1.4 1.4h-1.3" />
    <path d="M3.7 8.4h8.6v6.4H3.7zM5.6 10.5h4.8M5.6 12.4h3.2M2.8 6.6h1" />
  </Icon>
);

const SOCIAL = [
  {
    name: "Facebook",
    icon: <path d="M6 15.5V8.7H3.6V6H6V4.2C6 1.8 7.3.6 9.5.6h2.3v2.8h-1.5c-1 0-1.4.4-1.4 1.3V6h2.8l-.5 2.7H8.9v6.8z" />,
  },
  {
    name: "Twitter",
    icon: <path d="M15.5 3.4l-1.6 1.9C14 10.6 10.5 14 6 14 3.7 14 2 13.3.8 12.4c1.7.1 3-.3 4-1.2-1.3-.3-2.1-1.1-2.5-2.2h1.2C2 8.3 1.2 7.2 1.2 5.7l1.3.3C1.2 4.900.9 3.300 1.700 1.900 3.300 3.900 5.300 5 7.900 5.200 7.500 3.100 9 1.600 10.900 1.600c1 0 1.700.4 2.300 1l1.800-.6-.9 1.600z" />,
  },
  {
    name: "Pinterest",
    icon: (
      <path d="M5.5 15.5C4.5 13 6.5 9 7 6.5c1-2.4 3-.8 2 1.5-1 2.3.6 3 2 1.4C12.6 7.2 11.5 3.8 8.5 3.6 5.3 3.5 4 6.4 5.3 8.6L4.6 10C.8 8.4 1.8.8 8.5.8c6.8 0 7.500 9.400 2.200 10.700-1.200.3-2.200-.3-2.600-.9L7 13.800z" />
    ),
  },
  {
    name: "LinkedIn",
    icon: (
      <>
        <circle cx="2.2" cy="2" r="1.5" />
        <path d="M.8 5h2.9v10.4H.8zM6 5h2.8v1.300c1.800-2.200 6.600-1.900 6.600 2.700v6.400h-2.900V9.800c0-3.100-3.600-2.800-3.600 0v5.600H6z" />
      </>
    ),
  },
];

const FIELD = "flex h-[46px] items-center gap-[9px] rounded-[4px] border border-[#d8dce1] px-[14px] pb-[2px]";
const FIELD_INPUT = "w-full min-w-0 bg-transparent font-medium text-[#4f5962] outline-none placeholder:text-[#4f5962]";
const GHOST_BUTTON = "flex h-[42px] w-full items-center justify-center gap-2 rounded-[4px] border border-[#d8dce1] pb-[2px] font-bold text-[#949ca5]";

function DetailRow({ title, icon, label, value }: { title: string; icon: ReactNode; label: string; value: string }) {
  return (
    <section className="flex h-[122px] border-b border-dotted border-[#ced1d4] px-10 pt-[39px]">
      <h2 className="w-1/4 text-[17px] leading-7 font-bold">{title}</h2>
      <p className="flex h-[30px] items-center gap-[9px] text-[14px]">
        {icon}
        <span>
          {label}: <strong>{value}</strong>
        </span>
      </p>
    </section>
  );
}

function ListingCard() {
  return (
    <main className="min-w-0 flex-1 bg-white">
      <header className="h-[181px] border-b border-dotted border-[#ced1d4] px-10 pt-[39px]">
        <nav aria-label="Breadcrumb" className="flex h-6 items-center text-[#6b7178]">
          <a href="#" className="text-[#f15e75]">Home</a>
          <span className="mr-1 ml-[9px] font-bold text-[#4f5962]">›</span>
          <span>Seaside Loft with Rooftop Terrace</span>
        </nav>
        <h1 className="text-[31px] leading-[46px] font-bold">Seaside Loft with Rooftop Terrace</h1>
        <address className="mt-3">
          <PinIcon />
        </address>
      </header>

      <section className="h-[131px] border-b border-dotted border-[#ced1d4] px-10 pt-[39px]">
        <h2 className="text-[21px] leading-[30px] font-bold">About this listing</h2>
      </section>

      <DetailRow title="Details" icon={<DocumentIcon />} label="ID" value="5" />
      <DetailRow title="Prices" icon={<GuestsIcon className="size-[14px]" />} label="Allow Additional Guests" value="No" />

      <div className="relative h-[390px] overflow-hidden">
        <StreetMap />
        <div className="absolute top-[10px] left-[10px] flex flex-col rounded-[4px] border-2 border-black/20 bg-white bg-clip-padding font-[Liberation_Sans,sans-serif] text-[22px] font-bold text-black">
          <button type="button" aria-label="Zoom in" className="h-[30px] w-[30px] border-b border-[#cccccc] pt-1 leading-[26px]">+</button>
          <button type="button" aria-label="Zoom out" className="h-[30px] w-[30px] pt-1 leading-[26px]">−</button>
        </div>
      </div>
    </main>
  );
}

function BookingCard() {
  return (
    <aside className="w-[360px] shrink-0 bg-white">
      <div className="flex h-16 items-center bg-[#222222] px-[30px] pb-[2px] text-[30px] text-white">Free</div>

      <form className="flex flex-col border-b border-dotted border-[#ced1d4] px-[30px] pt-5 pb-[21px]">
        <div className="grid grid-cols-2 gap-[10px]">
          <label className={FIELD}>
            <CalendarIcon />
            <input type="text" placeholder="Arrive" aria-label="Arrive" className={FIELD_INPUT} />
          </label>
          <label className={FIELD}>
            <CalendarIcon />
            <input type="text" placeholder="Depart" aria-label="Depart" className={FIELD_INPUT} />
          </label>
        </div>
        <label className={`${FIELD} mt-[10px]`}>
          <GuestsIcon className="size-[17px]" />
          <input type="text" placeholder="Guests" aria-label="Guests" className={FIELD_INPUT} />
        </label>
        <textarea
          placeholder="Introduce yourself to the host"
          aria-label="Introduce yourself to the host"
          className="mt-[10px] h-[86px] rounded-[4px] border border-[#d8dce1] px-3 py-[10px] leading-[22px] font-medium outline-none placeholder:text-[#4f5962]"
        />
        <button type="submit" className="mt-[15px] h-[42px] rounded-[4px] bg-[#f35e76] pb-[2px] font-bold text-white">
          Request to Book
        </button>
        <p className="mt-[10px] mb-px flex h-[22px] items-center justify-center gap-[2px] text-[13px] text-[#949ca5]">
          <InfoIcon />
          You won't be charged yet
        </p>
      </form>

      <div className="flex flex-col gap-[10px] px-[30px] pt-[30px] pb-5 text-[#949ca5]">
        <button type="button" className={GHOST_BUTTON}>
          <HeartIcon />
          Add to Favorites
        </button>
        <button type="button" className={GHOST_BUTTON}>Contact the host</button>
        <button type="button" className="flex h-[42px] w-full items-center justify-center gap-2 pb-[2px] font-bold">
          <PrinterIcon />
          Print this page
        </button>
      </div>

      <div className="flex h-[69px] items-center justify-center gap-[33px] bg-[#f1f2f4] pb-[3px] text-[#949ca5]">
        {SOCIAL.map((item) => (
          <a key={item.name} href="#" aria-label={item.name}>
            <Icon>{item.icon}</Icon>
          </a>
        ))}
      </div>
    </aside>
  );
}

export default function App() {
  return (
    <div className="min-h-screen bg-[#f7f8fa] px-6 pt-[54px] font-[Lato,sans-serif] text-[15px] text-[#4f5962]">
      <div className="mx-auto flex max-w-[1140px] items-start gap-[30px]">
        <ListingCard />
        <BookingCard />
      </div>
    </div>
  );
}
